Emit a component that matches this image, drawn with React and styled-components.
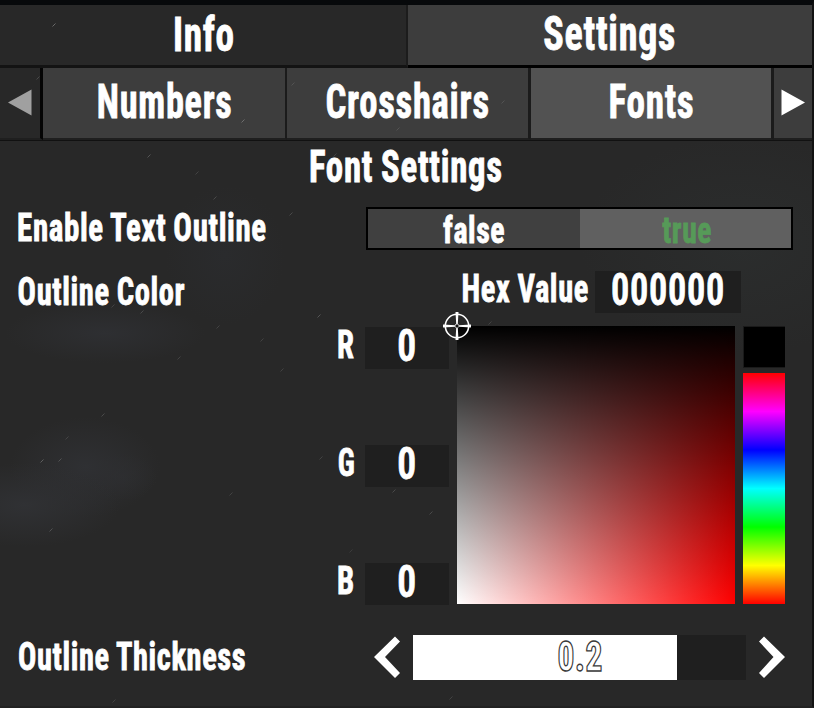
import React, { useLayoutEffect, useRef, useState } from 'react';
import styled, { createGlobalStyle } from 'styled-components';

const GlobalStyle = createGlobalStyle`
  *, *::before, *::after { box-sizing: border-box; }
  body { margin: 0; background: #282828; overflow: hidden; }
`;

const Panel = styled.main`
  position: relative;
  width: 814px;
  height: 708px;
  display: flex;
  flex-direction: column;
  overflow: hidden;
  color: #fff;
  font-family: Roboto, 'Liberation Sans', sans-serif;
  font-stretch: 75%;
  font-weight: 700;
  border-top: 5px solid #07090b;
  border-right: 2px solid #121212;
  border-bottom: 2px solid #222;
  background:
    radial-gradient(ellipse 95px 42px at 25px 500px, #303134 0%, #30313400 100%),
    radial-gradient(ellipse 75px 50px at 85px 462px, #2f3033 0%, #2f303300 100%),
    radial-gradient(ellipse 35px 24px at 122px 472px, #2f303380 0%, #2f303300 100%),
    radial-gradient(ellipse 100px 30px at 105px 328px, #2e2f32 0%, #2e2f3200 100%),
    radial-gradient(ellipse 60px 70px at 225px 250px, #2a2b2d 0%, #2a2b2d00 100%),
    radial-gradient(ellipse 160px 110px at 740px 240px, #2b2d2d 0%, #2b2d2d00 100%),
    #282828;
`;

const Dust = styled.svg`
  position: absolute;
  left: 0;
  top: -5px;
  pointer-events: none;
`;

const TextBox = styled.span`
  display: inline-flex;
  justify-content: center;
  flex: none;
  width: ${p => p.$width}px;
  line-height: 1;
  font-size: ${p => p.$size}px;
  transform: translateY(${p => p.$shift || 0}px);
`;

const TextInk = styled.span`
  flex: none;
  white-space: pre;
  letter-spacing: 0.02em;
  padding-left: 0.02em;
  word-spacing: -0.02em;
  font-weight: ${p => p.$weight || 700};
  color: ${p => p.$color || '#fff'};
  -webkit-text-stroke: ${p => p.$outline || '0.8px #fff'};
`;

// Condenses a run of text horizontally so that it fills the given width.
function Condensed({ width, size, shift, color, weight, outline, children }) {
  const ref = useRef(null);
  const [scale, setScale] = useState(1);
  useLayoutEffect(() => {
    setScale((width - 1) / (ref.current.offsetWidth - size * 0.1));
  }, [width, size]);
  return (
    <TextBox $width={width} $size={size} $shift={shift}>
      <TextInk
        ref={ref}
        $color={color}
        $weight={weight}
        $outline={outline}
        style={{ transform: `scaleX(${scale})` }}
      >
        {children}
      </TextInk>
    </TextBox>
  );
}

const MainTabs = styled.nav`
  display: grid;
  grid-template-columns: 408px 1fr;
  height: 63px;
`;

const MainTab = styled.button`
  display: flex;
  align-items: center;
  justify-content: center;
  padding: 0 ${p => (p.$active ? 2 : 0)}px 0 0;
  border: 0;
  border-right: ${p => (p.$active ? '0' : '2px solid #1c1c1c')};
  border-bottom: 3px solid ${p => (p.$active ? '#000' : '#131313')};
  background: ${p => (p.$active ? '#3d3d3d' : 'transparent')};
  font: inherit;
`;

const SubTabs = styled.nav`
  display: grid;
  grid-template-columns: 43px 244px 244px 243px 1fr;
  height: 73px;
  border-bottom: 1px solid #111;
`;

const SubTab = styled.button`
  display: flex;
  align-items: center;
  justify-content: center;
  padding: 0;
  border: 0;
  border-right: ${p => p.$gap || 2}px solid #1b1b1b;
  border-bottom: 2px solid #1f1f1f;
  background: ${p => (p.$active ? '#525252' : '#3d3d3d')};
  font: inherit;
`;

const PageButton = styled.button`
  display: flex;
  align-items: center;
  padding: 0 0 2px ${p => (p.$disabled ? 8 : 7)}px;
  border: 0;
  border-right: ${p => (p.$disabled ? '3px solid #040404' : '0')};
  border-bottom: 2px solid #1f1f1f;
  background: ${p => (p.$disabled ? 'transparent' : '#3d3d3d')};
  color: ${p => (p.$disabled ? '#a0a0a0' : '#fff')};
`;

const Title = styled.h1`
  display: flex;
  align-items: center;
  justify-content: center;
  height: 51px;
  margin: 0;
  padding-right: 1px;
  font: inherit;
`;

const Row = styled.section`
  display: flex;
  align-items: center;
  height: ${p => p.$height}px;
  margin-top: ${p => p.$gap}px;
  padding-left: 18px;
`;

const RowLabel = styled.div`
  display: flex;
  width: ${p => p.$width}px;
`;

const Toggle = styled.div`
  display: grid;
  grid-template-columns: 1fr 1fr;
  width: 427px;
  height: 43px;
  border: 2px solid #000;
`;

const ToggleOption = styled.button`
  display: flex;
  align-items: center;
  justify-content: center;
  padding: 0 0 0 ${p => (p.$active ? 3 : 0)}px;
  border: 0;
  background: ${p => (p.$active ? '#606060' : '#404040')};
  font: inherit;
`;

const Field = styled.div`
  display: flex;
  align-items: center;
  justify-content: center;
  width: ${p => p.$width}px;
  height: 42px;
  background: #1f1f1f;
`;

const HexField = styled(Field)`
  margin-left: 7px;
`;

const Picker = styled.section`
  display: flex;
  height: 278px;
  margin-top: 13px;
  padding-left: 338px;
`;

const Channels = styled.div`
  display: flex;
  flex-direction: column;
  justify-content: space-between;
  width: 119px;
  padding-top: 1px;
  margin-bottom: -1px;
`;

const Channel = styled.div`
  display: flex;
  align-items: center;
  gap: 11px;
`;

const Shade = styled.div`
  position: relative;
  width: 278px;
  height: 278px;
  background: linear-gradient(to bottom, #000, #0000), linear-gradient(to right, #fff, #f00);
`;

const Reticle = styled.svg`
  position: absolute;
  left: -14px;
  top: -14px;
`;

const HueColumn = styled.div`
  display: flex;
  flex-direction: column;
  gap: 5px;
  width: 42px;
  margin-left: 8px;
`;

const Swatch = styled.div`
  height: 42px;
  border: 1px solid #1a1a1a;
  border-right: 0;
  background: #000;
`;

const Hue = styled.div`
  flex: 1;
  background: linear-gradient(to bottom, #f00, #f0f, #00f, #0ff, #0f0, #ff0, #f00);
`;

const Slider = styled.div`
  display: flex;
  align-items: center;
  justify-content: center;
  width: 333px;
  height: 45px;
  margin: 0 13px;
  background: linear-gradient(to right, #fff ${p => p.$fill}px, #1f1f1f ${p => p.$fill}px);
`;

const StepButton = styled.button`
  display: flex;
  padding: 0;
  border: 0;
  background: none;
`;

const dust = [
  [54, 25, 1], [38, 78, 0.5], [243, 121, 0.9], [293, 84, 0.4], [383, 1, 0.7], [503, 102, 0.4],
  [398, 129, 0.4], [722, 2, 0.7], [149, 156, 0.7], [197, 173, 0.4], [215, 198, 0.5], [291, 214, 0.5],
  [335, 155, 0.4], [113, 306, 0.4], [142, 312, 0.5], [319, 316, 0.7], [218, 327, 0.4],
  [262, 340, 0.4], [282, 370, 0.4], [179, 358, 0.4], [103, 415, 0.5], [67, 438, 0.4],
  [42, 461, 0.8], [60, 460, 0.6], [321, 458, 0.4], [394, 491, 0.5], [431, 513, 0.5],
  [231, 494, 0.4], [51, 530, 0.6], [490, 323, 0.4], [351, 551, 0.3], [451, 698, 0.4], [114, 701, 0.4],
];

function Triangle({ flip }) {
  return (
    <svg width="24" height="27" viewBox="0 0 24 27">
      <path d={flip ? 'M0.5 0.5 L24 13.5 L0.5 26.5Z' : 'M23.5 0.5 L0 13.5 L23.5 26.5Z'} fill="currentColor" />
    </svg>
  );
}

function Chevron({ flip }) {
  return (
    <svg width="26" height="43" viewBox="0 0 26 43">
      <path
        d={flip ? 'M0 5.5 L5 0.5 L26 21 L5 42 L0 37 L14.5 21Z' : 'M26 5.5 L21 0.5 L0 21 L21 42 L26 37 L11 21Z'}
        fill="#fff"
      />
    </svg>
  );
}

export default function App() {
  return (
    <Panel>
      <GlobalStyle />
      <MainTabs>
        <MainTab><Condensed width={60} size={48}>Info</Condensed></MainTab>
        <MainTab $active><Condensed width={131} size={48} shift={-1}>Settings</Condensed></MainTab>
      </MainTabs>
      <SubTabs>
        <PageButton $disabled><Triangle /></PageButton>
        <SubTab><Condensed width={134} size={48} shift={-1}>Numbers</Condensed></SubTab>
        <SubTab $gap={3}><Condensed width={162} size={48} shift={-1}>Crosshairs</Condensed></SubTab>
        <SubTab $active $gap={3}><Condensed width={84} size={48} shift={-1}>Fonts</Condensed></SubTab>
        <PageButton><Triangle flip /></PageButton>
      </SubTabs>

      <Title><Condensed width={192} size={43.5} shift={1}>Font Settings</Condensed></Title>

      <Row $gap={15} $height={43}>
        <RowLabel $width={348}><Condensed width={248} size={38.5}>Enable Text Outline</Condensed></RowLabel>
        <Toggle>
          <ToggleOption><Condensed width={61} size={36} shift={1.5}>false</Condensed></ToggleOption>
          <ToggleOption $active>
            <Condensed width={48} size={36} shift={1.5} color="#569a58" outline="0.8px #569a58">true</Condensed>
          </ToggleOption>
        </Toggle>
      </Row>

      <Row $gap={21} $height={42}>
        <RowLabel $width={444}><Condensed width={166} size={38.5}>Outline Color</Condensed></RowLabel>
        <Condensed width={126} size={38.5} shift={-3}>Hex Value</Condensed>
        <HexField $width={146}><Condensed width={112} size={43.5} weight={600} shift={-1.5}>000000</Condensed></HexField>
      </Row>

      <Picker>
        <Channels>
          {['R', 'G', 'B'].map(name => (
            <Channel key={name}>
              <Condensed width={16} size={39} shift={-3.5}>{name}</Condensed>
              <Field $width={84}><Condensed width={18} size={43.5} weight={600} shift={-1.5}>0</Condensed></Field>
            </Channel>
          ))}
        </Channels>
        <Shade>
          <Reticle width="28" height="28" viewBox="0 0 28 28">
            <circle cx="14" cy="14" r="11.7" fill="none" stroke="#fff" strokeWidth="1.6" />
            <path d="M12.5 0h3l-.7 12h-1.6zM12.5 28h3l-.7-12h-1.6zM0 12.5v3l12-.7v-1.6zM28 12.5v3l-12-.7v-1.6z" fill="#fff" />
            <rect x="12.5" y="12.5" width="3" height="3" fill="#111" stroke="#ccc" strokeWidth="0.6" />
          </Reticle>
        </Shade>
        <HueColumn>
          <Swatch />
          <Hue />
        </HueColumn>
      </Picker>

      <Row $gap={31} $height={45}>
        <RowLabel $width={356}><Condensed width={227} size={38.5}>Outline Thickness</Condensed></RowLabel>
        <StepButton><Chevron /></StepButton>
        <Slider $fill={264}>
          <Condensed width={44} size={43} weight={800} shift={-1} outline="1.4px #3a3a3a">0.2</Condensed>
        </Slider>
        <StepButton><Chevron flip /></StepButton>
      </Row>

      <Dust width="814" height="708" viewBox="0 0 814 708">
        {dust.map(([x, y, o]) => (
          <path key={`${x}-${y}`} d={`M${x - 1.5} ${y + 1.5} l3 -3`} stroke="#aaa" strokeWidth="1" opacity={o * 0.5} />
        ))}
      </Dust>
    </Panel>
  );
}
